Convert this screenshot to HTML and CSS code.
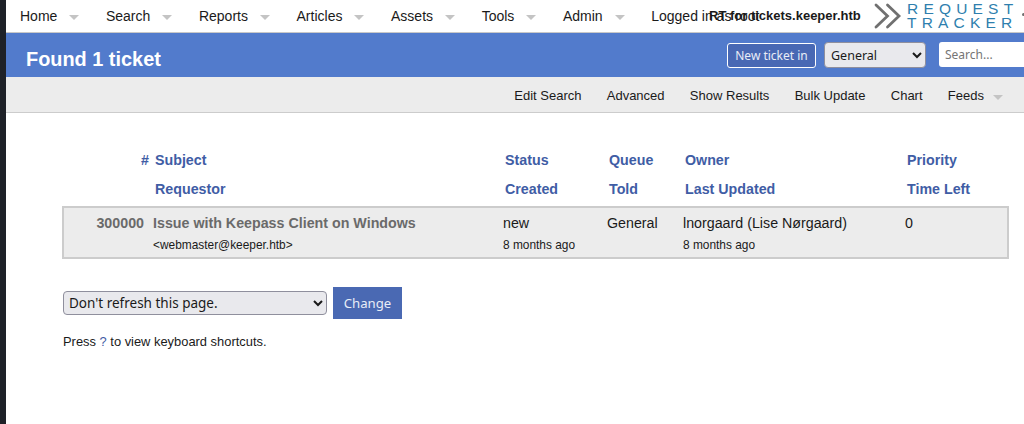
FILE: index.html
```html
<!DOCTYPE html>
<html lang="en">
<head>
  <meta charset="UTF-8">
  <meta name="viewport" content="width=device-width, initial-scale=1.0">
  <title>Found 1 ticket</title>
  <link rel="stylesheet" href="styles.css">
</head>
<body>
  <div class="strip"></div>
  <div class="page">
    <header class="topbar">
      <nav class="mainmenu">
        <a class="menu-item" href="#">Home<span class="caret"></span></a>
        <a class="menu-item" href="#">Search<span class="caret"></span></a>
        <a class="menu-item" href="#">Reports<span class="caret"></span></a>
        <a class="menu-item" href="#">Articles<span class="caret"></span></a>
        <a class="menu-item" href="#">Assets<span class="caret"></span></a>
        <a class="menu-item" href="#">Tools<span class="caret"></span></a>
        <a class="menu-item" href="#">Admin<span class="caret"></span></a>
        <a class="menu-item" href="#">Logged in as root</a>
      </nav>
      <!-- overlaps the user menu, same as the real page at this width -->
      <div class="rtname">RT for tickets.keeper.htb</div>
      <div class="logo">
        <svg class="logo-mark" width="38" height="26" viewBox="0 0 38 26">
          <path d="M2 2 L13.5 13 L2 24 M13.5 2 L25 13 L13.5 24" fill="none" stroke="#707070" stroke-width="2.8" stroke-linecap="round"/>
        </svg>
        <div class="logo-text">
          <span>REQUEST</span>
          <span>TRACKER</span>
        </div>
        <span class="logo-dot"></span>
      </div>
    </header>

    <div class="titlebar">
      <h1>Found 1 ticket</h1>
      <form class="quick">
        <button class="new-ticket" type="button">New ticket in</button>
        <select class="queue-select"><option>General</option></select>
        <input class="search" type="text" placeholder="Search...">
      </form>
    </div>

    <nav class="pagemenu">
      <a href="#">Edit Search</a>
      <a href="#">Advanced</a>
      <a href="#">Show Results</a>
      <a href="#">Bulk Update</a>
      <a href="#">Chart</a>
      <a href="#">Feeds<span class="caret"></span></a>
    </nav>

    <main class="content">
      <table class="tickets">
        <colgroup>
          <col class="c-id"><col class="c-subject"><col class="c-status">
          <col class="c-queue"><col class="c-owner"><col class="c-priority">
        </colgroup>
        <thead>
          <tr class="head-one">
            <th class="num"><a href="#">#</a></th>
            <th><a href="#">Subject</a></th>
            <th><a href="#">Status</a></th>
            <th><a href="#">Queue</a></th>
            <th><a href="#">Owner</a></th>
            <th><a href="#">Priority</a></th>
          </tr>
          <tr class="head-two">
            <th></th>
            <th><a href="#">Requestor</a></th>
            <th><a href="#">Created</a></th>
            <th><a href="#">Told</a></th>
            <th><a href="#">Last Updated</a></th>
            <th><a href="#">Time Left</a></th>
          </tr>
        </thead>
        <tbody>
          <tr class="row-one">
            <td class="num id">300000</td>
            <td class="subject">Issue with Keepass Client on Windows</td>
            <td>new</td>
            <td>General</td>
            <td>lnorgaard (Lise Nørgaard)</td>
            <td>0</td>
          </tr>
          <tr class="row-two">
            <td></td>
            <td>&lt;webmaster@keeper.htb&gt;</td>
            <td>8 months ago</td>
            <td></td>
            <td>8 months ago</td>
            <td></td>
          </tr>
        </tbody>
      </table>

      <form class="refresh">
        <select class="refresh-select"><option>Don't refresh this page.</option></select>
        <button class="change" type="button">Change</button>
      </form>

      <p class="keys">Press <a href="#">?</a> to view keyboard shortcuts.</p>
    </main>
  </div>
</body>
</html>
```

FILE: styles.css
```css
* {
  box-sizing: border-box;
}

html, body {
  height: 100%;
}

body {
  margin: 0;
  display: flex;
  overflow: hidden;
  font-family: "Liberation Sans", Arial, sans-serif;
  font-size: 14px;
  color: #1a1a1a;
  background: white;
}

a {
  color: inherit;
  text-decoration: none;
}

.strip {
  flex: 0 0 6px;
  background: #1e2128;
}

.page {
  flex: 1;
  min-width: 0;
}

.topbar {
  position: relative;
  height: 33px;
  border-bottom: 1px solid #c8c8c8;
  overflow: hidden;
}

.mainmenu {
  display: flex;
  height: 32px;
  align-items: center;
  padding-left: 14px;
  white-space: nowrap;
}

.menu-item {
  display: flex;
  align-items: center;
  margin-right: 26.6px;
}

.caret {
  display: inline-block;
  width: 0;
  height: 0;
  margin-left: 12px;
  margin-top: 3px;
  border-left: 5px solid transparent;
  border-right: 5px solid transparent;
  border-top: 5px solid #c4c4c4;
}

.pagemenu .caret {
  margin-left: 9px;
}

.rtname {
  position: absolute;
  top: 8px;
  left: 703px;
  font-size: 13px;
  font-weight: bold;
  white-space: nowrap;
}

.logo {
  position: absolute;
  top: 0;
  left: 868px;
  display: flex;
  align-items: center;
}

.logo-mark {
  margin-top: 2px;
}

.logo-text {
  display: flex;
  flex-direction: column;
  margin-left: -5px;
  color: #2f7fae;
  font-size: 15.5px;
  line-height: 14px;
  letter-spacing: 5.2px;
  padding-top: 2px;
}

.logo-dot {
  position: absolute;
  top: 13px;
  left: 148px;
  width: 3px;
  height: 3px;
  border-radius: 50%;
  background: #707070;
}

.titlebar {
  display: flex;
  align-items: center;
  height: 44px;
  padding-left: 20px;
  background: #527bcc;
  overflow: hidden;
}

.titlebar h1 {
  margin: 0;
  padding-top: 8px;
  flex: 1;
  color: white;
  font-size: 19.9px;
  font-weight: bold;
}

.quick {
  display: flex;
  align-items: center;
  gap: 9px;
  margin-right: -25px;
}

.new-ticket {
  width: 89px;
  height: 25px;
  margin: 1px -1px 0 0;
  padding: 0;
  color: #e8edf7;
  background: #4868b4;
  border: 1px solid white;
  border-radius: 3px;
  font-family: "Noto Sans", sans-serif;
  font-size: 12px;
}

.queue-select {
  width: 102px;
  height: 26px;
  margin-right: 4px;
  padding-left: 2px;
  font-family: "Noto Sans", sans-serif;
  font-size: 12.5px;
  color: #1a1a1a;
  background: #e9e9ed;
  border: 1px solid #8f8f9d;
  border-radius: 4px;
}

.search {
  width: 110px;
  height: 25px;
  margin-top: -1px;
  padding-left: 6px;
  border: none;
  border-radius: 3px;
  font-family: "Noto Sans", sans-serif;
  font-size: 12px;
}

.pagemenu {
  display: flex;
  justify-content: flex-end;
  align-items: center;
  gap: 25.3px;
  height: 36px;
  padding: 2px 21px 0 0;
  background: #ececec;
  border-bottom: 1px solid #cccccc;
  font-size: 13px;
}

.pagemenu a {
  display: flex;
  align-items: center;
}

.content {
  padding: 32px 10px 0 56px;
}

.tickets {
  width: 945px;
  table-layout: fixed;
  border-collapse: collapse;
  font-size: 14.25px;
}

.c-id { width: 90px; }
.c-subject { width: 350px; }
.c-status { width: 104px; }
.c-queue { width: 76px; }
.c-owner { width: 222px; }
.c-priority { width: 103px; }

.tickets th {
  padding: 0 0 0 2px;
  text-align: left;
  color: #3f5da5;
}

.tickets th.num {
  padding-right: 4px;
  text-align: right;
}

.head-one th {
  height: 30px;
}

.head-two th {
  height: 32px;
  padding-bottom: 4px;
}

.tickets tbody {
  border: 2px solid #cccccc;
  background: #ececec;
}

.tickets td {
  padding: 0;
}

.row-one td {
  height: 30px;
  padding-top: 1px;
}

.row-two td {
  height: 21px;
  padding-bottom: 5px;
  font-size: 11.9px;
}

.tickets td.num {
  padding-right: 9px;
  text-align: right;
}

.id, .subject {
  color: #6a6a6a;
  font-weight: bold;
}

.refresh {
  display: flex;
  align-items: center;
  gap: 6px;
  margin-top: 28px;
  margin-left: 1px;
}

.refresh-select {
  width: 264px;
  height: 24px;
  padding-left: 1px;
  font-family: "Noto Sans", sans-serif;
  font-size: 13.5px;
  color: #1a1a1a;
  background: #e9e9ed;
  border: 1px solid #8f8f9d;
  border-radius: 4px;
}

.change {
  width: 69px;
  height: 32px;
  padding: 0;
  color: #e8edf7;
  background: #4a69b3;
  border: none;
  font-family: "Noto Sans", sans-serif;
  font-size: 13.2px;
}

.keys {
  margin: 15px 0 0 1px;
  font-size: 12.9px;
}

.keys a {
  color: #3f5da5;
}
```
